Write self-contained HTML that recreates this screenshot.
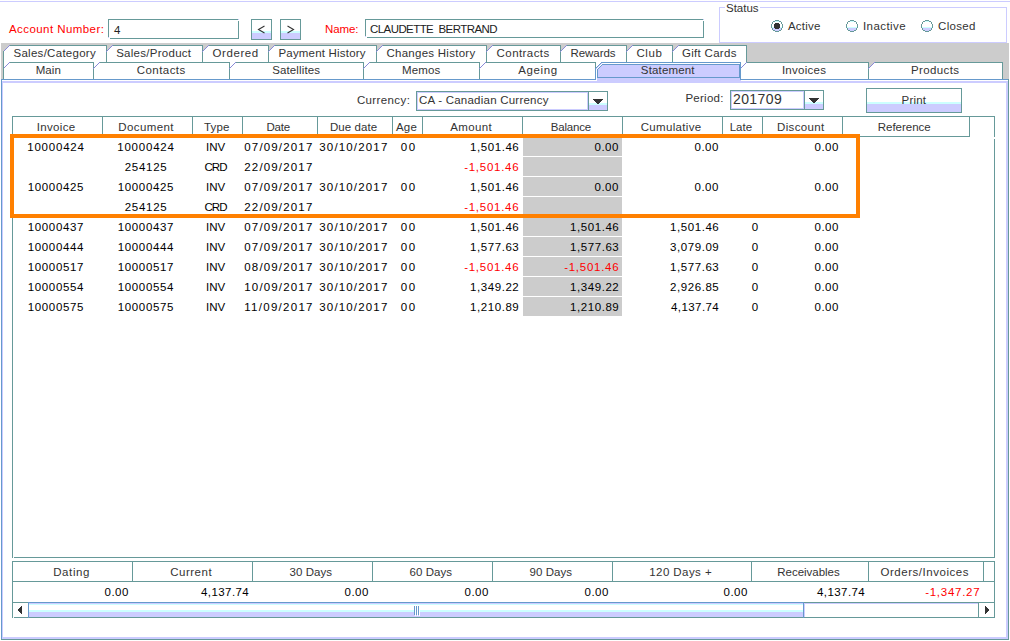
<!DOCTYPE html>
<html><head><meta charset="utf-8"><style>
html,body{margin:0;padding:0;background:#ffffff;width:1010px;height:641px;overflow:hidden}
svg{display:block}
text{font-family:"Liberation Sans",sans-serif;}
</style></head><body>
<svg width="1010" height="641" viewBox="0 0 1010 641" shape-rendering="crispEdges">
<rect x="0" y="1" width="1010" height="1" fill="#ccccff"/>
<rect x="108" y="19" width="131" height="1" fill="#669999"/>
<rect x="108" y="19" width="1" height="19" fill="#669999"/>
<rect x="110" y="38" width="129" height="1" fill="#669999"/>
<rect x="238" y="19" width="1" height="20" fill="#669999"/>
<rect x="238" y="19" width="1" height="1" fill="#ccccff"/>
<rect x="238" y="20" width="1" height="1" fill="#ffffff"/>
<rect x="108" y="37" width="1" height="1" fill="#ccccff"/>
<rect x="108" y="38" width="2" height="1" fill="#ffffff"/>
<rect x="251" y="19" width="21" height="21" fill="#ffffff"/>
<rect x="252" y="31" width="19" height="2" fill="#ccffff"/>
<rect x="252" y="33" width="19" height="6" fill="#ccccff"/>
<rect x="251" y="19" width="21" height="1" fill="#669999"/>
<rect x="251" y="39" width="21" height="1" fill="#669999"/>
<rect x="251" y="19" width="1" height="21" fill="#669999"/>
<rect x="271" y="19" width="1" height="21" fill="#669999"/>
<rect x="280" y="19" width="21" height="21" fill="#ffffff"/>
<rect x="281" y="31" width="19" height="2" fill="#ccffff"/>
<rect x="281" y="33" width="19" height="6" fill="#ccccff"/>
<rect x="280" y="19" width="21" height="1" fill="#669999"/>
<rect x="280" y="39" width="21" height="1" fill="#669999"/>
<rect x="280" y="19" width="1" height="21" fill="#669999"/>
<rect x="300" y="19" width="1" height="21" fill="#669999"/>
<path d="M264.5 26 L258.5 29.5 L264.5 33" fill="none" stroke="#333" stroke-width="1.1" shape-rendering="geometricPrecision"/>
<path d="M287.5 26 L293.5 29.5 L287.5 33" fill="none" stroke="#333" stroke-width="1.1" shape-rendering="geometricPrecision"/>
<rect x="365" y="19" width="339" height="1" fill="#669999"/>
<rect x="365" y="19" width="1" height="18" fill="#669999"/>
<rect x="367" y="37" width="337" height="1" fill="#669999"/>
<rect x="703" y="19" width="1" height="19" fill="#669999"/>
<rect x="703" y="19" width="1" height="1" fill="#ccccff"/>
<rect x="703" y="20" width="1" height="1" fill="#ffffff"/>
<rect x="365" y="36" width="1" height="1" fill="#ccccff"/>
<rect x="365" y="37" width="2" height="1" fill="#ffffff"/>
<rect x="719" y="7" width="6" height="1" fill="#ccccff"/>
<rect x="760" y="7" width="247" height="1" fill="#ccccff"/>
<rect x="719" y="42" width="288" height="1" fill="#ccccff"/>
<rect x="719" y="7" width="1" height="36" fill="#ccccff"/>
<rect x="1006" y="7" width="1" height="36" fill="#ccccff"/>
<rect x="775" y="21" width="4" height="1" fill="#ccffff"/>
<rect x="773" y="22" width="8" height="1" fill="#ffffff"/>
<rect x="773" y="23" width="8" height="1" fill="#ffffff"/>
<rect x="772" y="24" width="10" height="1" fill="#ffffff"/>
<rect x="772" y="25" width="10" height="1" fill="#ffffff"/>
<rect x="772" y="26" width="10" height="1" fill="#ffffff"/>
<rect x="772" y="27" width="10" height="1" fill="#ccffff"/>
<rect x="773" y="28" width="8" height="1" fill="#ccccff"/>
<rect x="773" y="29" width="8" height="1" fill="#ccccff"/>
<rect x="775" y="30" width="4" height="1" fill="#ccccff"/>
<rect x="775" y="20" width="1" height="1" fill="#669999"/>
<rect x="776" y="20" width="1" height="1" fill="#669999"/>
<rect x="777" y="20" width="1" height="1" fill="#669999"/>
<rect x="778" y="20" width="1" height="1" fill="#669999"/>
<rect x="773" y="21" width="1" height="1" fill="#669999"/>
<rect x="774" y="21" width="1" height="1" fill="#669999"/>
<rect x="779" y="21" width="1" height="1" fill="#669999"/>
<rect x="780" y="21" width="1" height="1" fill="#669999"/>
<rect x="772" y="22" width="1" height="1" fill="#669999"/>
<rect x="781" y="22" width="1" height="1" fill="#669999"/>
<rect x="772" y="23" width="1" height="1" fill="#669999"/>
<rect x="781" y="23" width="1" height="1" fill="#669999"/>
<rect x="771" y="24" width="1" height="1" fill="#669999"/>
<rect x="771" y="25" width="1" height="1" fill="#669999"/>
<rect x="771" y="26" width="1" height="1" fill="#669999"/>
<rect x="771" y="27" width="1" height="1" fill="#669999"/>
<rect x="782" y="24" width="1" height="1" fill="#669999"/>
<rect x="782" y="25" width="1" height="1" fill="#669999"/>
<rect x="782" y="26" width="1" height="1" fill="#669999"/>
<rect x="782" y="27" width="1" height="1" fill="#669999"/>
<rect x="775" y="31" width="1" height="1" fill="#669999"/>
<rect x="776" y="31" width="1" height="1" fill="#669999"/>
<rect x="777" y="31" width="1" height="1" fill="#669999"/>
<rect x="778" y="31" width="1" height="1" fill="#669999"/>
<rect x="773" y="30" width="1" height="1" fill="#669999"/>
<rect x="774" y="30" width="1" height="1" fill="#669999"/>
<rect x="779" y="30" width="1" height="1" fill="#669999"/>
<rect x="780" y="30" width="1" height="1" fill="#669999"/>
<rect x="772" y="29" width="1" height="1" fill="#669999"/>
<rect x="781" y="29" width="1" height="1" fill="#669999"/>
<rect x="772" y="28" width="1" height="1" fill="#669999"/>
<rect x="781" y="28" width="1" height="1" fill="#669999"/>
<rect x="775" y="23" width="4" height="6" fill="#333333"/>
<rect x="774" y="24" width="6" height="4" fill="#333333"/>
<rect x="850" y="21" width="4" height="1" fill="#ccffff"/>
<rect x="848" y="22" width="8" height="1" fill="#ffffff"/>
<rect x="848" y="23" width="8" height="1" fill="#ffffff"/>
<rect x="847" y="24" width="10" height="1" fill="#ffffff"/>
<rect x="847" y="25" width="10" height="1" fill="#ffffff"/>
<rect x="847" y="26" width="10" height="1" fill="#ffffff"/>
<rect x="847" y="27" width="10" height="1" fill="#ccffff"/>
<rect x="848" y="28" width="8" height="1" fill="#ccccff"/>
<rect x="848" y="29" width="8" height="1" fill="#ccccff"/>
<rect x="850" y="30" width="4" height="1" fill="#ccccff"/>
<rect x="850" y="20" width="1" height="1" fill="#669999"/>
<rect x="851" y="20" width="1" height="1" fill="#669999"/>
<rect x="852" y="20" width="1" height="1" fill="#669999"/>
<rect x="853" y="20" width="1" height="1" fill="#669999"/>
<rect x="848" y="21" width="1" height="1" fill="#669999"/>
<rect x="849" y="21" width="1" height="1" fill="#669999"/>
<rect x="854" y="21" width="1" height="1" fill="#669999"/>
<rect x="855" y="21" width="1" height="1" fill="#669999"/>
<rect x="847" y="22" width="1" height="1" fill="#669999"/>
<rect x="856" y="22" width="1" height="1" fill="#669999"/>
<rect x="847" y="23" width="1" height="1" fill="#669999"/>
<rect x="856" y="23" width="1" height="1" fill="#669999"/>
<rect x="846" y="24" width="1" height="1" fill="#669999"/>
<rect x="846" y="25" width="1" height="1" fill="#669999"/>
<rect x="846" y="26" width="1" height="1" fill="#669999"/>
<rect x="846" y="27" width="1" height="1" fill="#669999"/>
<rect x="857" y="24" width="1" height="1" fill="#669999"/>
<rect x="857" y="25" width="1" height="1" fill="#669999"/>
<rect x="857" y="26" width="1" height="1" fill="#669999"/>
<rect x="857" y="27" width="1" height="1" fill="#669999"/>
<rect x="850" y="31" width="1" height="1" fill="#669999"/>
<rect x="851" y="31" width="1" height="1" fill="#669999"/>
<rect x="852" y="31" width="1" height="1" fill="#669999"/>
<rect x="853" y="31" width="1" height="1" fill="#669999"/>
<rect x="848" y="30" width="1" height="1" fill="#669999"/>
<rect x="849" y="30" width="1" height="1" fill="#669999"/>
<rect x="854" y="30" width="1" height="1" fill="#669999"/>
<rect x="855" y="30" width="1" height="1" fill="#669999"/>
<rect x="847" y="29" width="1" height="1" fill="#669999"/>
<rect x="856" y="29" width="1" height="1" fill="#669999"/>
<rect x="847" y="28" width="1" height="1" fill="#669999"/>
<rect x="856" y="28" width="1" height="1" fill="#669999"/>
<rect x="925" y="21" width="4" height="1" fill="#ccffff"/>
<rect x="923" y="22" width="8" height="1" fill="#ffffff"/>
<rect x="923" y="23" width="8" height="1" fill="#ffffff"/>
<rect x="922" y="24" width="10" height="1" fill="#ffffff"/>
<rect x="922" y="25" width="10" height="1" fill="#ffffff"/>
<rect x="922" y="26" width="10" height="1" fill="#ffffff"/>
<rect x="922" y="27" width="10" height="1" fill="#ccffff"/>
<rect x="923" y="28" width="8" height="1" fill="#ccccff"/>
<rect x="923" y="29" width="8" height="1" fill="#ccccff"/>
<rect x="925" y="30" width="4" height="1" fill="#ccccff"/>
<rect x="925" y="20" width="1" height="1" fill="#669999"/>
<rect x="926" y="20" width="1" height="1" fill="#669999"/>
<rect x="927" y="20" width="1" height="1" fill="#669999"/>
<rect x="928" y="20" width="1" height="1" fill="#669999"/>
<rect x="923" y="21" width="1" height="1" fill="#669999"/>
<rect x="924" y="21" width="1" height="1" fill="#669999"/>
<rect x="929" y="21" width="1" height="1" fill="#669999"/>
<rect x="930" y="21" width="1" height="1" fill="#669999"/>
<rect x="922" y="22" width="1" height="1" fill="#669999"/>
<rect x="931" y="22" width="1" height="1" fill="#669999"/>
<rect x="922" y="23" width="1" height="1" fill="#669999"/>
<rect x="931" y="23" width="1" height="1" fill="#669999"/>
<rect x="921" y="24" width="1" height="1" fill="#669999"/>
<rect x="921" y="25" width="1" height="1" fill="#669999"/>
<rect x="921" y="26" width="1" height="1" fill="#669999"/>
<rect x="921" y="27" width="1" height="1" fill="#669999"/>
<rect x="932" y="24" width="1" height="1" fill="#669999"/>
<rect x="932" y="25" width="1" height="1" fill="#669999"/>
<rect x="932" y="26" width="1" height="1" fill="#669999"/>
<rect x="932" y="27" width="1" height="1" fill="#669999"/>
<rect x="925" y="31" width="1" height="1" fill="#669999"/>
<rect x="926" y="31" width="1" height="1" fill="#669999"/>
<rect x="927" y="31" width="1" height="1" fill="#669999"/>
<rect x="928" y="31" width="1" height="1" fill="#669999"/>
<rect x="923" y="30" width="1" height="1" fill="#669999"/>
<rect x="924" y="30" width="1" height="1" fill="#669999"/>
<rect x="929" y="30" width="1" height="1" fill="#669999"/>
<rect x="930" y="30" width="1" height="1" fill="#669999"/>
<rect x="922" y="29" width="1" height="1" fill="#669999"/>
<rect x="931" y="29" width="1" height="1" fill="#669999"/>
<rect x="922" y="28" width="1" height="1" fill="#669999"/>
<rect x="931" y="28" width="1" height="1" fill="#669999"/>
<rect x="1" y="43" width="1008" height="36" fill="#cccccc"/>
<path d="M3 52 L10 45 L107 45 L107 69 L3 69 Z" fill="#ffffff"/>
<rect x="9" y="45" width="98" height="1" fill="#669999"/>
<rect x="3" y="51" width="1" height="11" fill="#669999"/>
<rect x="106" y="45" width="1" height="17" fill="#669999"/>
<rect x="3" y="51" width="1" height="1" fill="#8a8ad8"/>
<rect x="4" y="50" width="1" height="1" fill="#8a8ad8"/>
<rect x="5" y="49" width="1" height="1" fill="#8a8ad8"/>
<rect x="6" y="48" width="1" height="1" fill="#8a8ad8"/>
<rect x="7" y="47" width="1" height="1" fill="#8a8ad8"/>
<rect x="8" y="46" width="1" height="1" fill="#8a8ad8"/>
<rect x="9" y="45" width="1" height="1" fill="#8a8ad8"/>
<path d="M106 52 L113 45 L203 45 L203 69 L106 69 Z" fill="#ffffff"/>
<rect x="112" y="45" width="91" height="1" fill="#669999"/>
<rect x="106" y="51" width="1" height="11" fill="#669999"/>
<rect x="202" y="45" width="1" height="17" fill="#669999"/>
<rect x="106" y="51" width="1" height="1" fill="#8a8ad8"/>
<rect x="107" y="50" width="1" height="1" fill="#8a8ad8"/>
<rect x="108" y="49" width="1" height="1" fill="#8a8ad8"/>
<rect x="109" y="48" width="1" height="1" fill="#8a8ad8"/>
<rect x="110" y="47" width="1" height="1" fill="#8a8ad8"/>
<rect x="111" y="46" width="1" height="1" fill="#8a8ad8"/>
<rect x="112" y="45" width="1" height="1" fill="#8a8ad8"/>
<path d="M202 52 L209 45 L269 45 L269 69 L202 69 Z" fill="#ffffff"/>
<rect x="208" y="45" width="61" height="1" fill="#669999"/>
<rect x="202" y="51" width="1" height="11" fill="#669999"/>
<rect x="268" y="45" width="1" height="17" fill="#669999"/>
<rect x="202" y="51" width="1" height="1" fill="#8a8ad8"/>
<rect x="203" y="50" width="1" height="1" fill="#8a8ad8"/>
<rect x="204" y="49" width="1" height="1" fill="#8a8ad8"/>
<rect x="205" y="48" width="1" height="1" fill="#8a8ad8"/>
<rect x="206" y="47" width="1" height="1" fill="#8a8ad8"/>
<rect x="207" y="46" width="1" height="1" fill="#8a8ad8"/>
<rect x="208" y="45" width="1" height="1" fill="#8a8ad8"/>
<path d="M268 52 L275 45 L377 45 L377 69 L268 69 Z" fill="#ffffff"/>
<rect x="274" y="45" width="103" height="1" fill="#669999"/>
<rect x="268" y="51" width="1" height="11" fill="#669999"/>
<rect x="376" y="45" width="1" height="17" fill="#669999"/>
<rect x="268" y="51" width="1" height="1" fill="#8a8ad8"/>
<rect x="269" y="50" width="1" height="1" fill="#8a8ad8"/>
<rect x="270" y="49" width="1" height="1" fill="#8a8ad8"/>
<rect x="271" y="48" width="1" height="1" fill="#8a8ad8"/>
<rect x="272" y="47" width="1" height="1" fill="#8a8ad8"/>
<rect x="273" y="46" width="1" height="1" fill="#8a8ad8"/>
<rect x="274" y="45" width="1" height="1" fill="#8a8ad8"/>
<path d="M376 52 L383 45 L487 45 L487 69 L376 69 Z" fill="#ffffff"/>
<rect x="382" y="45" width="105" height="1" fill="#669999"/>
<rect x="376" y="51" width="1" height="11" fill="#669999"/>
<rect x="486" y="45" width="1" height="17" fill="#669999"/>
<rect x="376" y="51" width="1" height="1" fill="#8a8ad8"/>
<rect x="377" y="50" width="1" height="1" fill="#8a8ad8"/>
<rect x="378" y="49" width="1" height="1" fill="#8a8ad8"/>
<rect x="379" y="48" width="1" height="1" fill="#8a8ad8"/>
<rect x="380" y="47" width="1" height="1" fill="#8a8ad8"/>
<rect x="381" y="46" width="1" height="1" fill="#8a8ad8"/>
<rect x="382" y="45" width="1" height="1" fill="#8a8ad8"/>
<path d="M486 52 L493 45 L561 45 L561 69 L486 69 Z" fill="#ffffff"/>
<rect x="492" y="45" width="69" height="1" fill="#669999"/>
<rect x="486" y="51" width="1" height="11" fill="#669999"/>
<rect x="560" y="45" width="1" height="17" fill="#669999"/>
<rect x="486" y="51" width="1" height="1" fill="#8a8ad8"/>
<rect x="487" y="50" width="1" height="1" fill="#8a8ad8"/>
<rect x="488" y="49" width="1" height="1" fill="#8a8ad8"/>
<rect x="489" y="48" width="1" height="1" fill="#8a8ad8"/>
<rect x="490" y="47" width="1" height="1" fill="#8a8ad8"/>
<rect x="491" y="46" width="1" height="1" fill="#8a8ad8"/>
<rect x="492" y="45" width="1" height="1" fill="#8a8ad8"/>
<path d="M560 52 L567 45 L627 45 L627 69 L560 69 Z" fill="#ffffff"/>
<rect x="566" y="45" width="61" height="1" fill="#669999"/>
<rect x="560" y="51" width="1" height="11" fill="#669999"/>
<rect x="626" y="45" width="1" height="17" fill="#669999"/>
<rect x="560" y="51" width="1" height="1" fill="#8a8ad8"/>
<rect x="561" y="50" width="1" height="1" fill="#8a8ad8"/>
<rect x="562" y="49" width="1" height="1" fill="#8a8ad8"/>
<rect x="563" y="48" width="1" height="1" fill="#8a8ad8"/>
<rect x="564" y="47" width="1" height="1" fill="#8a8ad8"/>
<rect x="565" y="46" width="1" height="1" fill="#8a8ad8"/>
<rect x="566" y="45" width="1" height="1" fill="#8a8ad8"/>
<path d="M626 52 L633 45 L673 45 L673 69 L626 69 Z" fill="#ffffff"/>
<rect x="632" y="45" width="41" height="1" fill="#669999"/>
<rect x="626" y="51" width="1" height="11" fill="#669999"/>
<rect x="672" y="45" width="1" height="17" fill="#669999"/>
<rect x="626" y="51" width="1" height="1" fill="#8a8ad8"/>
<rect x="627" y="50" width="1" height="1" fill="#8a8ad8"/>
<rect x="628" y="49" width="1" height="1" fill="#8a8ad8"/>
<rect x="629" y="48" width="1" height="1" fill="#8a8ad8"/>
<rect x="630" y="47" width="1" height="1" fill="#8a8ad8"/>
<rect x="631" y="46" width="1" height="1" fill="#8a8ad8"/>
<rect x="632" y="45" width="1" height="1" fill="#8a8ad8"/>
<path d="M672 52 L679 45 L747 45 L747 69 L672 69 Z" fill="#ffffff"/>
<rect x="678" y="45" width="69" height="1" fill="#669999"/>
<rect x="672" y="51" width="1" height="11" fill="#669999"/>
<rect x="746" y="45" width="1" height="17" fill="#669999"/>
<rect x="672" y="51" width="1" height="1" fill="#8a8ad8"/>
<rect x="673" y="50" width="1" height="1" fill="#8a8ad8"/>
<rect x="674" y="49" width="1" height="1" fill="#8a8ad8"/>
<rect x="675" y="48" width="1" height="1" fill="#8a8ad8"/>
<rect x="676" y="47" width="1" height="1" fill="#8a8ad8"/>
<rect x="677" y="46" width="1" height="1" fill="#8a8ad8"/>
<rect x="678" y="45" width="1" height="1" fill="#8a8ad8"/>
<path d="M3 69 L10 62 L94 62 L94 79 L3 79 Z" fill="#ffffff"/>
<rect x="9" y="62" width="85" height="1" fill="#669999"/>
<rect x="3" y="68" width="1" height="11" fill="#669999"/>
<rect x="93" y="62" width="1" height="17" fill="#669999"/>
<rect x="3" y="68" width="1" height="1" fill="#8a8ad8"/>
<rect x="4" y="67" width="1" height="1" fill="#8a8ad8"/>
<rect x="5" y="66" width="1" height="1" fill="#8a8ad8"/>
<rect x="6" y="65" width="1" height="1" fill="#8a8ad8"/>
<rect x="7" y="64" width="1" height="1" fill="#8a8ad8"/>
<rect x="8" y="63" width="1" height="1" fill="#8a8ad8"/>
<rect x="9" y="62" width="1" height="1" fill="#8a8ad8"/>
<path d="M93 69 L100 62 L230 62 L230 79 L93 79 Z" fill="#ffffff"/>
<rect x="99" y="62" width="131" height="1" fill="#669999"/>
<rect x="93" y="68" width="1" height="11" fill="#669999"/>
<rect x="229" y="62" width="1" height="17" fill="#669999"/>
<rect x="93" y="68" width="1" height="1" fill="#8a8ad8"/>
<rect x="94" y="67" width="1" height="1" fill="#8a8ad8"/>
<rect x="95" y="66" width="1" height="1" fill="#8a8ad8"/>
<rect x="96" y="65" width="1" height="1" fill="#8a8ad8"/>
<rect x="97" y="64" width="1" height="1" fill="#8a8ad8"/>
<rect x="98" y="63" width="1" height="1" fill="#8a8ad8"/>
<rect x="99" y="62" width="1" height="1" fill="#8a8ad8"/>
<path d="M229 69 L236 62 L364 62 L364 79 L229 79 Z" fill="#ffffff"/>
<rect x="235" y="62" width="129" height="1" fill="#669999"/>
<rect x="229" y="68" width="1" height="11" fill="#669999"/>
<rect x="363" y="62" width="1" height="17" fill="#669999"/>
<rect x="229" y="68" width="1" height="1" fill="#8a8ad8"/>
<rect x="230" y="67" width="1" height="1" fill="#8a8ad8"/>
<rect x="231" y="66" width="1" height="1" fill="#8a8ad8"/>
<rect x="232" y="65" width="1" height="1" fill="#8a8ad8"/>
<rect x="233" y="64" width="1" height="1" fill="#8a8ad8"/>
<rect x="234" y="63" width="1" height="1" fill="#8a8ad8"/>
<rect x="235" y="62" width="1" height="1" fill="#8a8ad8"/>
<path d="M363 69 L370 62 L480 62 L480 79 L363 79 Z" fill="#ffffff"/>
<rect x="369" y="62" width="111" height="1" fill="#669999"/>
<rect x="363" y="68" width="1" height="11" fill="#669999"/>
<rect x="479" y="62" width="1" height="17" fill="#669999"/>
<rect x="363" y="68" width="1" height="1" fill="#8a8ad8"/>
<rect x="364" y="67" width="1" height="1" fill="#8a8ad8"/>
<rect x="365" y="66" width="1" height="1" fill="#8a8ad8"/>
<rect x="366" y="65" width="1" height="1" fill="#8a8ad8"/>
<rect x="367" y="64" width="1" height="1" fill="#8a8ad8"/>
<rect x="368" y="63" width="1" height="1" fill="#8a8ad8"/>
<rect x="369" y="62" width="1" height="1" fill="#8a8ad8"/>
<path d="M479 69 L486 62 L596 62 L596 79 L479 79 Z" fill="#ffffff"/>
<rect x="485" y="62" width="111" height="1" fill="#669999"/>
<rect x="479" y="68" width="1" height="11" fill="#669999"/>
<rect x="595" y="62" width="1" height="17" fill="#669999"/>
<rect x="479" y="68" width="1" height="1" fill="#8a8ad8"/>
<rect x="480" y="67" width="1" height="1" fill="#8a8ad8"/>
<rect x="481" y="66" width="1" height="1" fill="#8a8ad8"/>
<rect x="482" y="65" width="1" height="1" fill="#8a8ad8"/>
<rect x="483" y="64" width="1" height="1" fill="#8a8ad8"/>
<rect x="484" y="63" width="1" height="1" fill="#8a8ad8"/>
<rect x="485" y="62" width="1" height="1" fill="#8a8ad8"/>
<path d="M740 69 L747 62 L869 62 L869 79 L740 79 Z" fill="#ffffff"/>
<rect x="746" y="62" width="123" height="1" fill="#669999"/>
<rect x="740" y="68" width="1" height="11" fill="#669999"/>
<rect x="868" y="62" width="1" height="17" fill="#669999"/>
<rect x="740" y="68" width="1" height="1" fill="#8a8ad8"/>
<rect x="741" y="67" width="1" height="1" fill="#8a8ad8"/>
<rect x="742" y="66" width="1" height="1" fill="#8a8ad8"/>
<rect x="743" y="65" width="1" height="1" fill="#8a8ad8"/>
<rect x="744" y="64" width="1" height="1" fill="#8a8ad8"/>
<rect x="745" y="63" width="1" height="1" fill="#8a8ad8"/>
<rect x="746" y="62" width="1" height="1" fill="#8a8ad8"/>
<path d="M868 69 L875 62 L1003 62 L1003 79 L868 79 Z" fill="#ffffff"/>
<rect x="874" y="62" width="129" height="1" fill="#669999"/>
<rect x="868" y="68" width="1" height="11" fill="#669999"/>
<rect x="1002" y="62" width="1" height="17" fill="#669999"/>
<rect x="868" y="68" width="1" height="1" fill="#8a8ad8"/>
<rect x="869" y="67" width="1" height="1" fill="#8a8ad8"/>
<rect x="870" y="66" width="1" height="1" fill="#8a8ad8"/>
<rect x="871" y="65" width="1" height="1" fill="#8a8ad8"/>
<rect x="872" y="64" width="1" height="1" fill="#8a8ad8"/>
<rect x="873" y="63" width="1" height="1" fill="#8a8ad8"/>
<rect x="874" y="62" width="1" height="1" fill="#8a8ad8"/>
<rect x="3" y="51" width="1" height="28" fill="#669999"/>
<path d="M595 69 L602 62 L741 62 L741 83 L595 83 Z" fill="#ccccff"/>
<rect x="601" y="62" width="140" height="1" fill="#6699cc"/>
<rect x="595" y="68" width="1" height="12" fill="#6699cc"/>
<rect x="740" y="62" width="1" height="18" fill="#6699cc"/>
<rect x="595" y="68" width="1" height="1" fill="#6699cc"/>
<rect x="596" y="67" width="1" height="1" fill="#6699cc"/>
<rect x="597" y="66" width="1" height="1" fill="#6699cc"/>
<rect x="598" y="65" width="1" height="1" fill="#6699cc"/>
<rect x="599" y="64" width="1" height="1" fill="#6699cc"/>
<rect x="600" y="63" width="1" height="1" fill="#6699cc"/>
<rect x="601" y="62" width="1" height="1" fill="#6699cc"/>
<rect x="602" y="63" width="138" height="1" fill="#ffffff"/>
<rect x="596" y="69" width="1" height="12" fill="#ffffff"/>
<rect x="596" y="69" width="1" height="1" fill="#ffffff"/>
<rect x="597" y="68" width="1" height="1" fill="#ffffff"/>
<rect x="598" y="67" width="1" height="1" fill="#ffffff"/>
<rect x="599" y="66" width="1" height="1" fill="#ffffff"/>
<rect x="600" y="65" width="1" height="1" fill="#ffffff"/>
<rect x="601" y="64" width="1" height="1" fill="#ffffff"/>
<rect x="596" y="80" width="1" height="1" fill="#ffffff"/>
<rect x="603" y="64" width="137" height="1" fill="#6699cc"/>
<rect x="597" y="69" width="1" height="9" fill="#6699cc"/>
<rect x="739" y="64" width="1" height="14" fill="#6699cc"/>
<rect x="597" y="77" width="143" height="1" fill="#6699cc"/>
<rect x="597" y="69" width="1" height="1" fill="#6699cc"/>
<rect x="598" y="68" width="1" height="1" fill="#6699cc"/>
<rect x="599" y="67" width="1" height="1" fill="#6699cc"/>
<rect x="600" y="66" width="1" height="1" fill="#6699cc"/>
<rect x="601" y="65" width="1" height="1" fill="#6699cc"/>
<rect x="602" y="64" width="1" height="1" fill="#6699cc"/>
<rect x="2" y="83" width="1006" height="556" fill="#ffffff"/>
<rect x="1" y="79" width="595" height="1" fill="#6699cc"/>
<rect x="740" y="79" width="269" height="1" fill="#6699cc"/>
<rect x="2" y="80" width="595" height="1" fill="#ffffff"/>
<rect x="741" y="80" width="267" height="1" fill="#ffffff"/>
<rect x="1" y="79" width="1" height="561" fill="#6699cc"/>
<rect x="1008" y="79" width="1" height="561" fill="#669999"/>
<rect x="1" y="639" width="1008" height="1" fill="#669999"/>
<rect x="2" y="81" width="1006" height="2" fill="#ccccff"/>
<rect x="2" y="81" width="1" height="558" fill="#ccccff"/>
<rect x="1006" y="81" width="2" height="558" fill="#ccccff"/>
<rect x="2" y="637" width="1006" height="2" fill="#ccccff"/>
<rect x="416" y="91" width="192" height="20" fill="#ffffff"/>
<rect x="417" y="92" width="171" height="1" fill="#ccccff"/>
<rect x="417" y="109" width="171" height="1" fill="#ccccff"/>
<rect x="417" y="92" width="1" height="18" fill="#ccccff"/>
<rect x="587" y="92" width="1" height="18" fill="#ccccff"/>
<rect x="589" y="105" width="18" height="5" fill="#ccccff"/>
<rect x="589" y="103" width="18" height="2" fill="#ccffff"/>
<rect x="416" y="91" width="192" height="1" fill="#669999"/>
<rect x="416" y="110" width="192" height="1" fill="#669999"/>
<rect x="416" y="91" width="1" height="20" fill="#669999"/>
<rect x="607" y="91" width="1" height="20" fill="#669999"/>
<rect x="588" y="91" width="1" height="20" fill="#669999"/>
<rect x="593" y="99" width="10" height="1" fill="#333333"/>
<rect x="594" y="100" width="8" height="1" fill="#333333"/>
<rect x="595" y="101" width="6" height="1" fill="#333333"/>
<rect x="596" y="102" width="4" height="1" fill="#333333"/>
<rect x="597" y="103" width="2" height="1" fill="#333333"/>
<rect x="730" y="90" width="94" height="20" fill="#ffffff"/>
<rect x="731" y="91" width="73" height="1" fill="#ccccff"/>
<rect x="731" y="108" width="73" height="1" fill="#ccccff"/>
<rect x="731" y="91" width="1" height="18" fill="#ccccff"/>
<rect x="803" y="91" width="1" height="18" fill="#ccccff"/>
<rect x="805" y="104" width="18" height="5" fill="#ccccff"/>
<rect x="805" y="102" width="18" height="2" fill="#ccffff"/>
<rect x="730" y="90" width="94" height="1" fill="#669999"/>
<rect x="730" y="109" width="94" height="1" fill="#669999"/>
<rect x="730" y="90" width="1" height="20" fill="#669999"/>
<rect x="823" y="90" width="1" height="20" fill="#669999"/>
<rect x="804" y="90" width="1" height="20" fill="#669999"/>
<rect x="809" y="98" width="10" height="1" fill="#333333"/>
<rect x="810" y="99" width="8" height="1" fill="#333333"/>
<rect x="811" y="100" width="6" height="1" fill="#333333"/>
<rect x="812" y="101" width="4" height="1" fill="#333333"/>
<rect x="813" y="102" width="2" height="1" fill="#333333"/>
<rect x="866" y="88" width="96" height="25" fill="#ffffff"/>
<rect x="867" y="102" width="94" height="2" fill="#ccffff"/>
<rect x="867" y="104" width="94" height="8" fill="#ccccff"/>
<rect x="866" y="88" width="96" height="1" fill="#669999"/>
<rect x="866" y="112" width="96" height="1" fill="#669999"/>
<rect x="866" y="88" width="1" height="25" fill="#669999"/>
<rect x="961" y="88" width="1" height="25" fill="#669999"/>
<rect x="12" y="116" width="983" height="1" fill="#669999"/>
<rect x="12" y="136" width="958" height="1" fill="#669999"/>
<rect x="12" y="116" width="1" height="21" fill="#669999"/>
<rect x="102" y="116" width="1" height="21" fill="#669999"/>
<rect x="192" y="116" width="1" height="21" fill="#669999"/>
<rect x="242" y="116" width="1" height="21" fill="#669999"/>
<rect x="317" y="116" width="1" height="21" fill="#669999"/>
<rect x="392" y="116" width="1" height="21" fill="#669999"/>
<rect x="422" y="116" width="1" height="21" fill="#669999"/>
<rect x="522" y="116" width="1" height="21" fill="#669999"/>
<rect x="622" y="116" width="1" height="21" fill="#669999"/>
<rect x="722" y="116" width="1" height="21" fill="#669999"/>
<rect x="762" y="116" width="1" height="21" fill="#669999"/>
<rect x="842" y="116" width="1" height="21" fill="#669999"/>
<rect x="969" y="116" width="1" height="21" fill="#669999"/>
<rect x="12" y="136" width="1" height="422" fill="#669999"/>
<rect x="14" y="557" width="981" height="1" fill="#669999"/>
<rect x="994" y="116" width="1" height="21" fill="#669999"/>
<rect x="994" y="139" width="1" height="419" fill="#669999"/>
<rect x="523" y="137" width="99" height="19" fill="#cccccc"/>
<rect x="523" y="157" width="99" height="19" fill="#cccccc"/>
<rect x="523" y="177" width="99" height="19" fill="#cccccc"/>
<rect x="523" y="197" width="99" height="19" fill="#cccccc"/>
<rect x="523" y="217" width="99" height="19" fill="#cccccc"/>
<rect x="523" y="237" width="99" height="19" fill="#cccccc"/>
<rect x="523" y="257" width="99" height="19" fill="#cccccc"/>
<rect x="523" y="277" width="99" height="19" fill="#cccccc"/>
<rect x="523" y="297" width="99" height="19" fill="#cccccc"/>
<rect x="10" y="134" width="850" height="4" fill="#ff8000"/>
<rect x="10" y="214" width="850" height="4" fill="#ff8000"/>
<rect x="10" y="134" width="4" height="84" fill="#ff8000"/>
<rect x="856" y="134" width="4" height="84" fill="#ff8000"/>
<rect x="12" y="561" width="983" height="1" fill="#669999"/>
<rect x="12" y="581" width="983" height="1" fill="#669999"/>
<rect x="12" y="561" width="1" height="57" fill="#669999"/>
<rect x="994" y="561" width="1" height="57" fill="#669999"/>
<rect x="12" y="561" width="1" height="21" fill="#669999"/>
<rect x="132" y="561" width="1" height="21" fill="#669999"/>
<rect x="252" y="561" width="1" height="21" fill="#669999"/>
<rect x="372" y="561" width="1" height="21" fill="#669999"/>
<rect x="492" y="561" width="1" height="21" fill="#669999"/>
<rect x="612" y="561" width="1" height="21" fill="#669999"/>
<rect x="751" y="561" width="1" height="21" fill="#669999"/>
<rect x="868" y="561" width="1" height="21" fill="#669999"/>
<rect x="983" y="561" width="1" height="21" fill="#669999"/>
<rect x="994" y="561" width="1" height="21" fill="#669999"/>
<rect x="12" y="602" width="983" height="1" fill="#669999"/>
<rect x="14" y="617" width="981" height="1" fill="#669999"/>
<rect x="28" y="602" width="1" height="16" fill="#6699cc"/>
<rect x="18" y="609" width="1" height="2" fill="#333333"/>
<rect x="19" y="608" width="1" height="4" fill="#333333"/>
<rect x="20" y="607" width="1" height="6" fill="#333333"/>
<rect x="21" y="606" width="1" height="8" fill="#333333"/>
<rect x="28" y="602" width="776" height="1" fill="#6699cc"/>
<rect x="803" y="602" width="1" height="16" fill="#6699cc"/>
<rect x="29" y="603" width="774" height="1" fill="#ccccff"/>
<rect x="29" y="604" width="774" height="1" fill="#ccffff"/>
<rect x="29" y="610" width="774" height="2" fill="#ccffff"/>
<rect x="29" y="612" width="774" height="5" fill="#ccccff"/>
<rect x="415" y="605" width="1" height="11" fill="#ffffff"/>
<rect x="414" y="606" width="1" height="9" fill="#6699cc"/>
<rect x="417" y="605" width="1" height="11" fill="#ffffff"/>
<rect x="416" y="606" width="1" height="9" fill="#6699cc"/>
<rect x="419" y="605" width="1" height="11" fill="#ffffff"/>
<rect x="418" y="606" width="1" height="9" fill="#6699cc"/>
<rect x="978" y="602" width="1" height="16" fill="#669999"/>
<rect x="988" y="609" width="1" height="2" fill="#333333"/>
<rect x="987" y="608" width="1" height="4" fill="#333333"/>
<rect x="986" y="607" width="1" height="6" fill="#333333"/>
<rect x="985" y="606" width="1" height="8" fill="#333333"/>
<rect x="804" y="603" width="174" height="1" fill="#ccccff"/>
<rect x="804" y="603" width="1" height="14" fill="#ccccff"/>
<text x="9.00" y="33" fill="#ff0000" font-size="11.5" letter-spacing="0.429" xml:space="preserve">Account Number:</text>
<text x="114.00" y="34" fill="#222222" font-size="11.5" letter-spacing="0.000" xml:space="preserve">4</text>
<text x="325.00" y="33" fill="#ff0000" font-size="11.5" letter-spacing="-0.125" xml:space="preserve">Name:</text>
<text x="370.00" y="33" fill="#222222" font-size="11.5" letter-spacing="-0.572" xml:space="preserve">CLAUDETTE  BERTRAND</text>
<text x="726.00" y="12" fill="#333333" font-size="11.5" letter-spacing="0.000" xml:space="preserve">Status</text>
<text x="788.00" y="30" fill="#333333" font-size="11.5" letter-spacing="0.200" xml:space="preserve">Active</text>
<text x="863.00" y="30" fill="#333333" font-size="11.5" letter-spacing="0.429" xml:space="preserve">Inactive</text>
<text x="938.00" y="30" fill="#333333" font-size="11.5" letter-spacing="0.340" xml:space="preserve">Closed</text>
<text x="13.50" y="57" fill="#333333" font-size="11.5" letter-spacing="0.277" xml:space="preserve">Sales/Category</text>
<text x="116.15" y="57" fill="#333333" font-size="11.5" letter-spacing="0.275" xml:space="preserve">Sales/Product</text>
<text x="212.55" y="57" fill="#333333" font-size="11.5" letter-spacing="0.583" xml:space="preserve">Ordered</text>
<text x="278.45" y="57" fill="#333333" font-size="11.5" letter-spacing="0.193" xml:space="preserve">Payment History</text>
<text x="386.40" y="57" fill="#333333" font-size="11.5" letter-spacing="0.271" xml:space="preserve">Changes History</text>
<text x="496.60" y="57" fill="#333333" font-size="11.5" letter-spacing="0.425" xml:space="preserve">Contracts</text>
<text x="570.40" y="57" fill="#333333" font-size="11.5" letter-spacing="-0.033" xml:space="preserve">Rewards</text>
<text x="636.45" y="57" fill="#333333" font-size="11.5" letter-spacing="0.567" xml:space="preserve">Club</text>
<text x="681.95" y="57" fill="#333333" font-size="11.5" letter-spacing="0.300" xml:space="preserve">Gift Cards</text>
<text x="35.65" y="74" fill="#333333" font-size="11.5" letter-spacing="0.100" xml:space="preserve">Main</text>
<text x="136.70" y="74" fill="#333333" font-size="11.5" letter-spacing="0.457" xml:space="preserve">Contacts</text>
<text x="272.15" y="74" fill="#333333" font-size="11.5" letter-spacing="0.144" xml:space="preserve">Satellites</text>
<text x="402.05" y="74" fill="#333333" font-size="11.5" letter-spacing="0.125" xml:space="preserve">Memos</text>
<text x="518.30" y="74" fill="#333333" font-size="11.5" letter-spacing="0.600" xml:space="preserve">Ageing</text>
<text x="781.90" y="74" fill="#333333" font-size="11.5" letter-spacing="0.257" xml:space="preserve">Invoices</text>
<text x="910.90" y="74" fill="#333333" font-size="11.5" letter-spacing="0.400" xml:space="preserve">Products</text>
<text x="640.85" y="74" fill="#333333" font-size="11.5" letter-spacing="0.162" xml:space="preserve">Statement</text>
<text x="356.90" y="104" fill="#333333" font-size="11.5" letter-spacing="0.388" xml:space="preserve">Currency:</text>
<text x="419.00" y="104" fill="#333333" font-size="11.5" letter-spacing="0.229" xml:space="preserve">CA - Canadian Currency</text>
<text x="685.40" y="102" fill="#333333" font-size="11.5" letter-spacing="0.267" xml:space="preserve">Period:</text>
<text x="733.00" y="104" fill="#333333" font-size="14" letter-spacing="0.400" xml:space="preserve">201709</text>
<text x="901.60" y="104" fill="#333333" font-size="11.5" letter-spacing="0.200" xml:space="preserve">Print</text>
<text x="36.65" y="131" fill="#333333" font-size="11.5" letter-spacing="0.350" xml:space="preserve">Invoice</text>
<text x="118.30" y="131" fill="#333333" font-size="11.5" letter-spacing="0.400" xml:space="preserve">Document</text>
<text x="203.95" y="131" fill="#333333" font-size="11.5" letter-spacing="0.167" xml:space="preserve">Type</text>
<text x="266.45" y="131" fill="#333333" font-size="11.5" letter-spacing="-0.167" xml:space="preserve">Date</text>
<text x="329.90" y="131" fill="#333333" font-size="11.5" letter-spacing="0.086" xml:space="preserve">Due date</text>
<text x="396.05" y="131" fill="#333333" font-size="11.5" letter-spacing="0.150" xml:space="preserve">Age</text>
<text x="450.35" y="131" fill="#333333" font-size="11.5" letter-spacing="0.340" xml:space="preserve">Amount</text>
<text x="550.70" y="131" fill="#333333" font-size="11.5" letter-spacing="-0.167" xml:space="preserve">Balance</text>
<text x="640.70" y="131" fill="#333333" font-size="11.5" letter-spacing="0.333" xml:space="preserve">Cumulative</text>
<text x="729.70" y="131" fill="#333333" font-size="11.5" letter-spacing="0.000" xml:space="preserve">Late</text>
<text x="777.00" y="131" fill="#333333" font-size="11.5" letter-spacing="0.343" xml:space="preserve">Discount</text>
<text x="877.80" y="131" fill="#333333" font-size="11.5" letter-spacing="-0.025" xml:space="preserve">Reference</text>
<text x="27.25" y="151" fill="#000000" font-size="11.5" letter-spacing="0.786" xml:space="preserve">10000424</text>
<text x="117.25" y="151" fill="#000000" font-size="11.5" letter-spacing="0.786" xml:space="preserve">10000424</text>
<text x="206.10" y="151" fill="#000000" font-size="11.5" letter-spacing="-0.100" xml:space="preserve">INV</text>
<text x="244.25" y="151" fill="#000000" font-size="11.5" letter-spacing="1.167" xml:space="preserve">07/09/2017</text>
<text x="319.25" y="151" fill="#000000" font-size="11.5" letter-spacing="1.167" xml:space="preserve">30/10/2017</text>
<text x="400.70" y="151" fill="#000000" font-size="11.5" letter-spacing="1.600" xml:space="preserve">00</text>
<text x="470.00" y="151" fill="#000000" font-size="11.5" letter-spacing="0.571" xml:space="preserve">1,501.46</text>
<text x="594.50" y="151" fill="#000000" font-size="11.5" letter-spacing="0.500" xml:space="preserve">0.00</text>
<text x="694.50" y="151" fill="#000000" font-size="11.5" letter-spacing="0.500" xml:space="preserve">0.00</text>
<text x="814.50" y="151" fill="#000000" font-size="11.5" letter-spacing="0.500" xml:space="preserve">0.00</text>
<text x="124.75" y="171" fill="#000000" font-size="11.5" letter-spacing="0.700" xml:space="preserve">254125</text>
<text x="204.40" y="171" fill="#000000" font-size="11.5" letter-spacing="-0.900" xml:space="preserve">CRD</text>
<text x="244.25" y="171" fill="#000000" font-size="11.5" letter-spacing="1.167" xml:space="preserve">22/09/2017</text>
<text x="464.20" y="171" fill="#ff0000" font-size="11.5" letter-spacing="0.725" xml:space="preserve">-1,501.46</text>
<text x="27.75" y="191" fill="#000000" font-size="11.5" letter-spacing="0.643" xml:space="preserve">10000425</text>
<text x="117.75" y="191" fill="#000000" font-size="11.5" letter-spacing="0.643" xml:space="preserve">10000425</text>
<text x="206.10" y="191" fill="#000000" font-size="11.5" letter-spacing="-0.100" xml:space="preserve">INV</text>
<text x="244.25" y="191" fill="#000000" font-size="11.5" letter-spacing="1.167" xml:space="preserve">07/09/2017</text>
<text x="319.25" y="191" fill="#000000" font-size="11.5" letter-spacing="1.167" xml:space="preserve">30/10/2017</text>
<text x="400.70" y="191" fill="#000000" font-size="11.5" letter-spacing="1.600" xml:space="preserve">00</text>
<text x="470.00" y="191" fill="#000000" font-size="11.5" letter-spacing="0.571" xml:space="preserve">1,501.46</text>
<text x="594.50" y="191" fill="#000000" font-size="11.5" letter-spacing="0.500" xml:space="preserve">0.00</text>
<text x="694.50" y="191" fill="#000000" font-size="11.5" letter-spacing="0.500" xml:space="preserve">0.00</text>
<text x="814.50" y="191" fill="#000000" font-size="11.5" letter-spacing="0.500" xml:space="preserve">0.00</text>
<text x="124.75" y="211" fill="#000000" font-size="11.5" letter-spacing="0.700" xml:space="preserve">254125</text>
<text x="204.40" y="211" fill="#000000" font-size="11.5" letter-spacing="-0.900" xml:space="preserve">CRD</text>
<text x="244.25" y="211" fill="#000000" font-size="11.5" letter-spacing="1.167" xml:space="preserve">22/09/2017</text>
<text x="464.20" y="211" fill="#ff0000" font-size="11.5" letter-spacing="0.725" xml:space="preserve">-1,501.46</text>
<text x="27.75" y="231" fill="#000000" font-size="11.5" letter-spacing="0.643" xml:space="preserve">10000437</text>
<text x="117.75" y="231" fill="#000000" font-size="11.5" letter-spacing="0.643" xml:space="preserve">10000437</text>
<text x="206.10" y="231" fill="#000000" font-size="11.5" letter-spacing="-0.100" xml:space="preserve">INV</text>
<text x="244.25" y="231" fill="#000000" font-size="11.5" letter-spacing="1.167" xml:space="preserve">07/09/2017</text>
<text x="319.25" y="231" fill="#000000" font-size="11.5" letter-spacing="1.167" xml:space="preserve">30/10/2017</text>
<text x="400.70" y="231" fill="#000000" font-size="11.5" letter-spacing="1.600" xml:space="preserve">00</text>
<text x="470.00" y="231" fill="#000000" font-size="11.5" letter-spacing="0.571" xml:space="preserve">1,501.46</text>
<text x="570.00" y="231" fill="#000000" font-size="11.5" letter-spacing="0.571" xml:space="preserve">1,501.46</text>
<text x="670.00" y="231" fill="#000000" font-size="11.5" letter-spacing="0.571" xml:space="preserve">1,501.46</text>
<text x="751.70" y="231" fill="#000000" font-size="11.5" letter-spacing="0.000" xml:space="preserve">0</text>
<text x="814.50" y="231" fill="#000000" font-size="11.5" letter-spacing="0.500" xml:space="preserve">0.00</text>
<text x="27.75" y="251" fill="#000000" font-size="11.5" letter-spacing="0.643" xml:space="preserve">10000444</text>
<text x="117.75" y="251" fill="#000000" font-size="11.5" letter-spacing="0.643" xml:space="preserve">10000444</text>
<text x="206.10" y="251" fill="#000000" font-size="11.5" letter-spacing="-0.100" xml:space="preserve">INV</text>
<text x="244.25" y="251" fill="#000000" font-size="11.5" letter-spacing="1.167" xml:space="preserve">07/09/2017</text>
<text x="319.25" y="251" fill="#000000" font-size="11.5" letter-spacing="1.167" xml:space="preserve">30/10/2017</text>
<text x="400.70" y="251" fill="#000000" font-size="11.5" letter-spacing="1.600" xml:space="preserve">00</text>
<text x="470.00" y="251" fill="#000000" font-size="11.5" letter-spacing="0.571" xml:space="preserve">1,577.63</text>
<text x="570.00" y="251" fill="#000000" font-size="11.5" letter-spacing="0.571" xml:space="preserve">1,577.63</text>
<text x="670.00" y="251" fill="#000000" font-size="11.5" letter-spacing="0.571" xml:space="preserve">3,079.09</text>
<text x="751.70" y="251" fill="#000000" font-size="11.5" letter-spacing="0.000" xml:space="preserve">0</text>
<text x="814.50" y="251" fill="#000000" font-size="11.5" letter-spacing="0.500" xml:space="preserve">0.00</text>
<text x="27.75" y="271" fill="#000000" font-size="11.5" letter-spacing="0.643" xml:space="preserve">10000517</text>
<text x="117.75" y="271" fill="#000000" font-size="11.5" letter-spacing="0.643" xml:space="preserve">10000517</text>
<text x="206.10" y="271" fill="#000000" font-size="11.5" letter-spacing="-0.100" xml:space="preserve">INV</text>
<text x="244.25" y="271" fill="#000000" font-size="11.5" letter-spacing="1.167" xml:space="preserve">08/09/2017</text>
<text x="319.25" y="271" fill="#000000" font-size="11.5" letter-spacing="1.167" xml:space="preserve">30/10/2017</text>
<text x="400.70" y="271" fill="#000000" font-size="11.5" letter-spacing="1.600" xml:space="preserve">00</text>
<text x="464.20" y="271" fill="#ff0000" font-size="11.5" letter-spacing="0.725" xml:space="preserve">-1,501.46</text>
<text x="564.20" y="271" fill="#ff0000" font-size="11.5" letter-spacing="0.725" xml:space="preserve">-1,501.46</text>
<text x="670.00" y="271" fill="#000000" font-size="11.5" letter-spacing="0.571" xml:space="preserve">1,577.63</text>
<text x="751.70" y="271" fill="#000000" font-size="11.5" letter-spacing="0.000" xml:space="preserve">0</text>
<text x="814.50" y="271" fill="#000000" font-size="11.5" letter-spacing="0.500" xml:space="preserve">0.00</text>
<text x="27.75" y="291" fill="#000000" font-size="11.5" letter-spacing="0.643" xml:space="preserve">10000554</text>
<text x="117.75" y="291" fill="#000000" font-size="11.5" letter-spacing="0.643" xml:space="preserve">10000554</text>
<text x="206.10" y="291" fill="#000000" font-size="11.5" letter-spacing="-0.100" xml:space="preserve">INV</text>
<text x="244.25" y="291" fill="#000000" font-size="11.5" letter-spacing="1.167" xml:space="preserve">10/09/2017</text>
<text x="319.25" y="291" fill="#000000" font-size="11.5" letter-spacing="1.167" xml:space="preserve">30/10/2017</text>
<text x="400.70" y="291" fill="#000000" font-size="11.5" letter-spacing="1.600" xml:space="preserve">00</text>
<text x="470.00" y="291" fill="#000000" font-size="11.5" letter-spacing="0.571" xml:space="preserve">1,349.22</text>
<text x="570.00" y="291" fill="#000000" font-size="11.5" letter-spacing="0.571" xml:space="preserve">1,349.22</text>
<text x="670.00" y="291" fill="#000000" font-size="11.5" letter-spacing="0.571" xml:space="preserve">2,926.85</text>
<text x="751.70" y="291" fill="#000000" font-size="11.5" letter-spacing="0.000" xml:space="preserve">0</text>
<text x="814.50" y="291" fill="#000000" font-size="11.5" letter-spacing="0.500" xml:space="preserve">0.00</text>
<text x="27.75" y="311" fill="#000000" font-size="11.5" letter-spacing="0.643" xml:space="preserve">10000575</text>
<text x="117.75" y="311" fill="#000000" font-size="11.5" letter-spacing="0.643" xml:space="preserve">10000575</text>
<text x="206.10" y="311" fill="#000000" font-size="11.5" letter-spacing="-0.100" xml:space="preserve">INV</text>
<text x="244.25" y="311" fill="#000000" font-size="11.5" letter-spacing="1.278" xml:space="preserve">11/09/2017</text>
<text x="319.25" y="311" fill="#000000" font-size="11.5" letter-spacing="1.167" xml:space="preserve">30/10/2017</text>
<text x="400.70" y="311" fill="#000000" font-size="11.5" letter-spacing="1.600" xml:space="preserve">00</text>
<text x="470.00" y="311" fill="#000000" font-size="11.5" letter-spacing="0.571" xml:space="preserve">1,210.89</text>
<text x="570.00" y="311" fill="#000000" font-size="11.5" letter-spacing="0.571" xml:space="preserve">1,210.89</text>
<text x="671.00" y="311" fill="#000000" font-size="11.5" letter-spacing="0.429" xml:space="preserve">4,137.74</text>
<text x="751.70" y="311" fill="#000000" font-size="11.5" letter-spacing="0.000" xml:space="preserve">0</text>
<text x="814.50" y="311" fill="#000000" font-size="11.5" letter-spacing="0.500" xml:space="preserve">0.00</text>
<text x="53.20" y="576" fill="#333333" font-size="11.5" letter-spacing="0.600" xml:space="preserve">Dating</text>
<text x="104.50" y="596" fill="#000000" font-size="11.5" letter-spacing="0.500" xml:space="preserve">0.00</text>
<text x="170.15" y="576" fill="#333333" font-size="11.5" letter-spacing="0.517" xml:space="preserve">Current</text>
<text x="201.00" y="596" fill="#000000" font-size="11.5" letter-spacing="0.429" xml:space="preserve">4,137.74</text>
<text x="289.55" y="576" fill="#333333" font-size="11.5" letter-spacing="0.050" xml:space="preserve">30 Days</text>
<text x="344.50" y="596" fill="#000000" font-size="11.5" letter-spacing="0.500" xml:space="preserve">0.00</text>
<text x="409.50" y="576" fill="#333333" font-size="11.5" letter-spacing="0.067" xml:space="preserve">60 Days</text>
<text x="464.50" y="596" fill="#000000" font-size="11.5" letter-spacing="0.500" xml:space="preserve">0.00</text>
<text x="529.55" y="576" fill="#333333" font-size="11.5" letter-spacing="0.050" xml:space="preserve">90 Days</text>
<text x="584.50" y="596" fill="#000000" font-size="11.5" letter-spacing="0.500" xml:space="preserve">0.00</text>
<text x="649.25" y="576" fill="#333333" font-size="11.5" letter-spacing="0.433" xml:space="preserve">120 Days +</text>
<text x="723.50" y="596" fill="#000000" font-size="11.5" letter-spacing="0.500" xml:space="preserve">0.00</text>
<text x="777.35" y="576" fill="#333333" font-size="11.5" letter-spacing="-0.030" xml:space="preserve">Receivables</text>
<text x="817.00" y="596" fill="#000000" font-size="11.5" letter-spacing="0.429" xml:space="preserve">4,137.74</text>
<text x="880.40" y="576" fill="#333333" font-size="11.5" letter-spacing="0.543" xml:space="preserve">Orders/Invoices</text>
<text x="925.20" y="596" fill="#ff0000" font-size="11.5" letter-spacing="0.725" xml:space="preserve">-1,347.27</text>
</svg>
</body></html>
